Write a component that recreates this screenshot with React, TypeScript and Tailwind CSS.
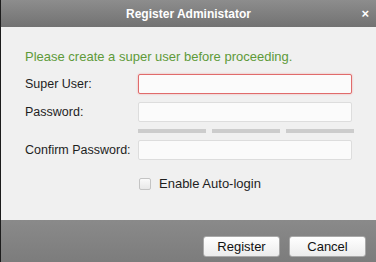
import { useState } from "react";

const font = { fontFamily: "'Liberation Sans', Arial, sans-serif" };

function Field({ label, error }: { label: string; error?: boolean }) {
  return (
    <div className="flex items-center">
      <div className="w-[113px] text-[12.5px] text-[#1e1e1e]">{label}</div>
      <input
        className={
          "h-[20px] w-[214px] rounded-[2px] bg-[#fbfbfb] outline-none " +
          (error
            ? "border border-[#e06b6b] shadow-[0_0_2px_#f0a0a0]"
            : "border border-[#dddddd]")
        }
      />
    </div>
  );
}

export default function App() {
  const [auto, setAuto] = useState(false);
  return (
    <div
      className="flex h-[262px] w-[376px] flex-col border-l border-[#1c1c1c] bg-[#f0f0f0]"
      style={font}
    >
      {/* Title bar */}
      <div className="grid h-[27px] grid-cols-[1fr_auto_1fr] items-center bg-gradient-to-b from-[#8d8d8d] to-[#727272]">
        <div />
        <div className="text-[12px] font-bold text-white">Register Administator</div>
        <div className="flex justify-end pr-[7px]">
          <span className="text-[13px] font-bold leading-none text-white">×</span>
        </div>
      </div>

      {/* Body */}
      <div className="flex flex-1 flex-col pl-[24px] pt-[22px]">
        <p className="text-[13px] leading-[16px] text-[#5e9a39]">
          Please create a super user before proceeding.
        </p>
        <div className="mt-[9px]">
          <Field label="Super User:" error />
        </div>
        <div className="mt-[8px]">
          <Field label="Password:" />
        </div>
        <div className="ml-[113px] mt-[7px] flex w-[216px] gap-[6px]">
          <div className="h-[4px] flex-1 bg-[#cccccc]" />
          <div className="h-[4px] flex-1 bg-[#cccccc]" />
          <div className="h-[4px] flex-1 bg-[#cccccc]" />
        </div>
        <div className="mt-[7px]">
          <Field label="Confirm Password:" />
        </div>
        <label className="ml-[114px] mt-[14px] flex items-center gap-[8px]">
          <input
            type="checkbox"
            checked={auto}
            onChange={() => setAuto(!auto)}
            className="h-[12px] w-[12px] appearance-none rounded-[2px] border border-[#c4c4c4] bg-gradient-to-b from-[#fafafa] to-[#e8e8e8]"
          />
          <span className="text-[13px] text-[#1e1e1e]">Enable Auto-login</span>
        </label>
      </div>

      {/* Footer */}
      <div className="flex h-[42px] items-end justify-end gap-[9px] bg-gradient-to-b from-[#8a8a8a] to-[#7c7c7c] pb-[5px] pr-[10px]">
        <button className="h-[21px] w-[77px] rounded-[3px] border border-[#a9a9a9] bg-gradient-to-b from-white to-[#ececec] text-[13px] text-[#111]">
          Register
        </button>
        <button className="h-[21px] w-[77px] rounded-[3px] border border-[#a9a9a9] bg-gradient-to-b from-white to-[#ececec] text-[13px] text-[#111]">
          Cancel
        </button>
      </div>
    </div>
  );
}
